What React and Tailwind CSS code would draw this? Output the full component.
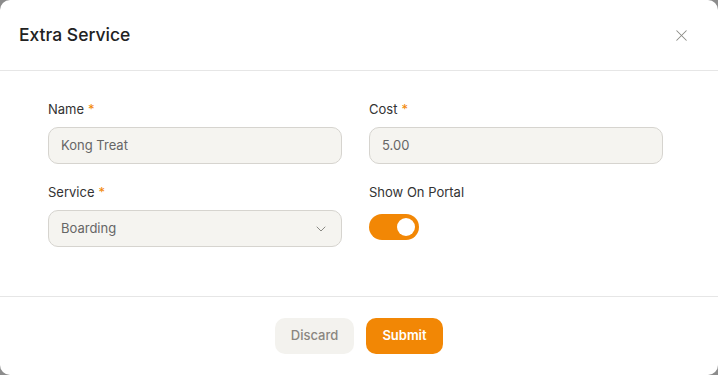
import { ChevronDown, X } from "lucide-react";

function Field({ label, required, children }) {
  return (
    <div className="flex flex-col">
      <label className="text-[13px] text-[#333333] leading-4 mb-[10px]">
        {label}
        {required && <span className="text-[#f28705] ml-1">*</span>}
      </label>
      {children}
    </div>
  );
}

export default function App() {
  return (
    <div
      className="w-[718px] h-[375px] bg-[#8c8c8c] overflow-hidden"
      style={{ fontFamily: "Inter, 'Noto Sans', sans-serif" }}
    >
      <div className="w-full h-full bg-white rounded-[10px] flex flex-col">
        {/* HEADER */}
        <div className="h-[71px] flex items-center justify-between pl-[19px] pr-[27px] border-b border-[#e6e6e6]">
          <h1 className="text-[17.5px] font-medium text-[#222222]">Extra Service</h1>
          <X size={19} strokeWidth={1.3} className="text-[#8a8a85]" />
        </div>

        {/* BODY */}
        <div className="flex-1 grid grid-cols-[294px_294px] gap-x-[27px] gap-y-[20px] px-[48px] pt-[30px] content-start">
          <Field label="Name" required>
            <div className="h-[37px] rounded-[10px] border border-[#d6d4cf] bg-[#f5f4f0] flex items-center px-3 text-[13px] text-[#666666]">
              Kong Treat
            </div>
          </Field>
          <Field label="Cost" required>
            <div className="h-[37px] rounded-[10px] border border-[#d6d4cf] bg-[#f5f4f0] flex items-center px-3 text-[13px] text-[#666666]">
              5.00
            </div>
          </Field>
          <Field label="Service" required>
            <div className="h-[37px] rounded-[10px] border border-[#d6d4cf] bg-[#f5f4f0] flex items-center justify-between pl-3 pr-[12px] text-[13px] text-[#666666]">
              Boarding
              <ChevronDown size={16} strokeWidth={1.5} className="text-[#8a8a85]" />
            </div>
          </Field>
          <Field label="Show On Portal">
            <div className="pt-[4px]">
              <div className="w-[50px] h-[26px] rounded-full bg-[#f28705] flex items-center justify-end pr-[4px]">
                <div className="w-[18px] h-[18px] rounded-full bg-white" />
              </div>
            </div>
          </Field>
        </div>

        {/* FOOTER */}
        <div className="h-[79px] border-t border-[#e6e6e6] flex items-center justify-center gap-[12px] pb-[1px]">
          <button className="w-[79px] h-[36px] rounded-[10px] bg-[#f3f2ee] text-[13px] font-medium text-[#8a8680]">
            Discard
          </button>
          <button className="w-[77px] h-[36px] rounded-[10px] bg-[#f28705] text-[13px] font-semibold text-white">
            Submit
          </button>
        </div>
      </div>
    </div>
  );
}
